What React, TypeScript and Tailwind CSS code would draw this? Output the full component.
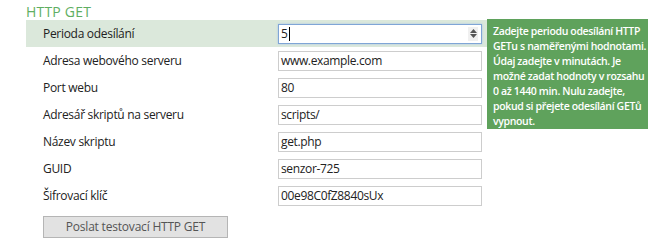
import React from "react";

const rows: { label: string; value: string }[] = [
  { label: "Perioda odesílání", value: "5" },
  { label: "Adresa webového serveru", value: "www.example.com" },
  { label: "Port webu", value: "80" },
  { label: "Adresář skriptů na serveru", value: "scripts/" },
  { label: "Název skriptu", value: "get.php" },
  { label: "GUID", value: "senzor-725" },
  { label: "Šifrovací klíč", value: "00e98C0fZ8840sUx" },
];

const tip = [
  "Zadejte periodu odesílání HTTP",
  "GETu s naměřenými hodnotami.",
  "Údaj zadejte v minutách. Je",
  "možné zadat hodnoty v rozsahu",
  "0 až 1440 min. Nulu zadejte,",
  "pokud si přejete odesílání GETů",
  "vypnout.",
];

export default function App() {
  return (
    <div
      className="relative w-[648px] h-[247px] overflow-hidden bg-white"
      style={{ fontFamily: '"Open Sans", "Noto Sans", sans-serif' }}
    >
      <div className="pl-[26px] pt-[3px]">
        <div className="text-[14px] leading-[17px] tracking-[0.2px] text-[#5fae62] uppercase">
          HTTP GET
        </div>
        <div className="flex flex-col">
          {rows.map((r, i) => (
            <div
              key={r.label}
              className={`flex items-center h-[27px] w-[461px] ${i === 0 ? "bg-[#dbe8db]" : ""}`}
            >
              <div className="w-[252px] pl-[17px] text-[12px] tracking-[-0.3px] text-[#222]">{r.label}</div>
              {i === 0 ? (
                <div className="relative flex items-center w-[204px] h-[20px] border border-[#7fa5d6] bg-white pl-[2px] text-[12px] tracking-[-0.35px] text-[#222] shadow-[0_0_2px_#a9c5ea]">
                  <span>{r.value}</span>
                  <span className="w-px h-[14px] bg-black ml-[1px]" />
                  <div className="absolute right-[3px] top-[2px] flex flex-col items-center justify-center w-[10px] h-[14px] bg-[#f0f0f0] gap-[1px]">
                    <svg width="7" height="4" viewBox="0 0 7 4"><path d="M0 4 L3.5 0 L7 4Z" fill="#555" /></svg>
                    <svg width="7" height="4" viewBox="0 0 7 4"><path d="M0 0 L3.5 4 L7 0Z" fill="#555" /></svg>
                  </div>
                </div>
              ) : (
                <div className="flex items-center w-[204px] h-[20px] border border-[#cdcdcd] bg-white pl-[2px] text-[12px] tracking-[-0.35px] text-[#222]">
                  {r.value}
                </div>
              )}
            </div>
          ))}
          <div className="pt-[7px] pl-[17px]">
            <div className="w-[185px] h-[22px] flex items-center justify-center bg-[#e2e2e2] border border-[#b5b5b5] text-[12px] tracking-[-0.2px] text-[#555]">
              Poslat testovací HTTP GET
            </div>
          </div>
        </div>
      </div>
      <div className="absolute left-[487px] top-[19px] w-[165px] h-[110px] bg-[#5fa25c] pl-[6px] pt-[5px] text-[10.5px] leading-[15px] tracking-[-0.35px] font-semibold text-white">
        {tip.map((l) => (
          <div key={l} className="whitespace-nowrap">{l}</div>
        ))}
      </div>
    </div>
  );
}
